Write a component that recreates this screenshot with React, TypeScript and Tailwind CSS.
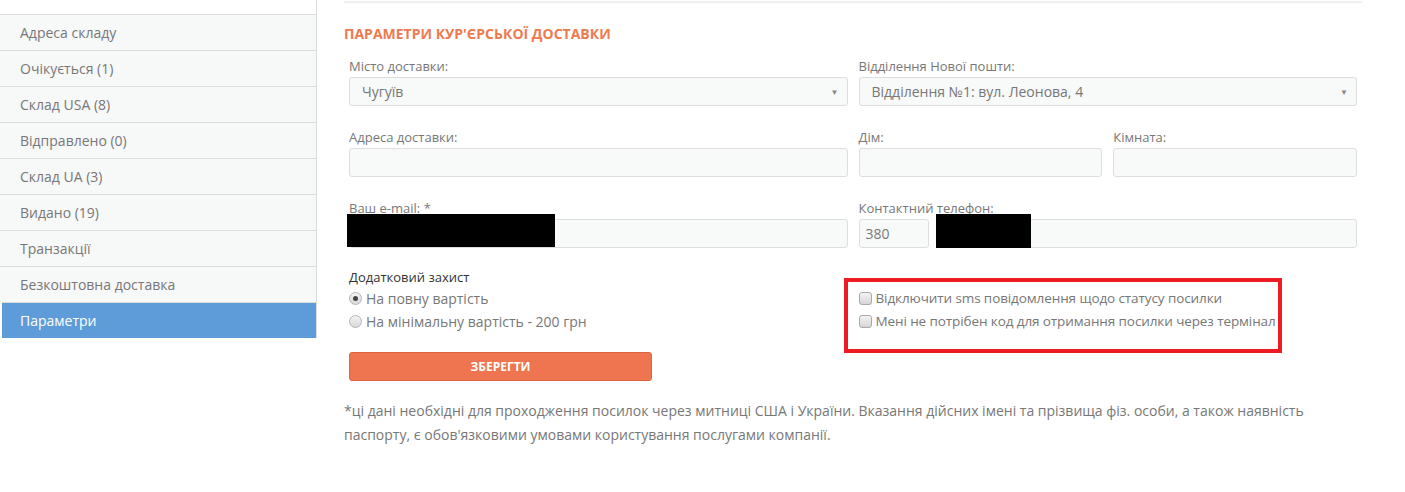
import React from 'react';

const MENU = [
  'Адреса складу',
  'Очікується (1)',
  'Склад USA (8)',
  'Відправлено (0)',
  'Склад UA (3)',
  'Видано (19)',
  'Транзакції',
  'Безкоштовна доставка',
];

const FONT = { fontFamily: '"Open Sans", "Noto Sans", sans-serif' };

function Label({ children }: { children: React.ReactNode }) {
  return <label className="block text-[13px] leading-[18px] text-[#777] mb-[2px]">{children}</label>;
}

function Input({ className = '' }: { className?: string }) {
  return (
    <div
      className={`h-[29px] bg-[#f8f9f9] border border-[#dedede] rounded-[3px] ${className}`}
    />
  );
}

function Select({ value }: { value: string }) {
  return (
    <div className="h-[29px] bg-[#f8f9f9] border border-[#dedede] rounded-[3px] flex items-center justify-between pl-[12px] pr-[8px]">
      <span className="text-[14px] text-[#777]">{value}</span>
      <span className="text-[8px] text-[#888] leading-none">▼</span>
    </div>
  );
}

function Radio({ checked, children }: { checked?: boolean; children: React.ReactNode }) {
  return (
    <div className="flex items-center h-[23px] gap-[4px]">
      <span className="w-[13px] h-[13px] rounded-full border border-[#b5b5b5] bg-gradient-to-b from-[#f4f4f4] to-[#d8d8d8] flex items-center justify-center">
        {checked && <span className="w-[5px] h-[5px] rounded-full bg-[#444]" />}
      </span>
      <span className="text-[14px] text-[#777]">{children}</span>
    </div>
  );
}

function Check({ children }: { children: React.ReactNode }) {
  return (
    <div className="flex items-center h-[23px] gap-[4px] whitespace-nowrap">
      <span className="shrink-0 w-[13px] h-[13px] rounded-[3px] border border-[#a9a9a9] bg-gradient-to-b from-[#f4f4f4] to-[#d6d6d6]" />
      <span className="text-[13.5px] tracking-[-0.1px] text-[#777]">{children}</span>
    </div>
  );
}

export default function App() {
  return (
    <div className="flex bg-white w-[1405px] h-[492px] overflow-hidden" style={FONT}>
      {/* Sidebar */}
      <div className="w-[317px] shrink-0 self-start border-r border-[#dcdcdc] pt-[14px]">
        {MENU.map((item) => (
          <div
            key={item}
            className="h-[36px] border-t border-[#dcdcdc] bg-[#f7f8f8] flex items-center pl-[20px] text-[14px] text-[#777]"
          >
            {item}
          </div>
        ))}
        <div className="h-[36px] border-t border-[#dcdcdc] ml-[2px] bg-[#5e9cd9] flex items-center pl-[18px] text-[14px] text-white">
          Параметри
        </div>
      </div>

      {/* Main */}
      <div className="pl-[27px] w-[1045px]">
        <div className="mt-[1px] h-[2px] bg-[#f0f0f0]" />

        <h2 className="mt-[21px] text-[14px] leading-[19px] font-bold uppercase text-[#ee7a4f]">
          Параметри кур'єрської доставки
        </h2>

        <div className="pl-[5px] w-[1013px]">
          {/* Row 1 */}
          <div className="grid grid-cols-2 gap-x-[11px] mt-[14px]">
            <div>
              <Label>Місто доставки:</Label>
              <Select value="Чугуїв" />
            </div>
            <div>
              <Label>Відділення Нової пошти:</Label>
              <Select value="Відділення №1: вул. Леонова, 4" />
            </div>
          </div>

          {/* Row 2 */}
          <div className="grid grid-cols-2 gap-x-[11px] mt-[22px]">
            <div>
              <Label>Адреса доставки:</Label>
              <Input />
            </div>
            <div className="grid grid-cols-2 gap-x-[11px]">
              <div>
                <Label>Дім:</Label>
                <Input />
              </div>
              <div>
                <Label>Кімната:</Label>
                <Input />
              </div>
            </div>
          </div>

          {/* Row 3 */}
          <div className="grid grid-cols-2 gap-x-[11px] mt-[22px]">
            <div className="relative">
              <Label>Ваш e-mail: *</Label>
              <Input />
              <div className="absolute left-[-2px] top-[15px] w-[208px] h-[33px] bg-black" />
            </div>
            <div>
              <Label>Контактний телефон:</Label>
              <div className="flex gap-[7px] relative">
                <div className="w-[70px] h-[29px] bg-[#f8f9f9] border border-[#dedede] rounded-[3px] flex items-center pl-[6px] text-[14px] text-[#777]">
                  380
                </div>
                <Input className="flex-1" />
                <div className="absolute left-[77px] top-[-5px] w-[95px] h-[34px] bg-black" />
              </div>
            </div>
          </div>

          {/* Row 4 */}
          <div className="grid grid-cols-2 gap-x-[11px] mt-[20px]">
            <div>
              <div className="text-[13px] leading-[18px] text-[#333]">Додатковий захист</div>
              <div className="mt-[1px]">
                <Radio checked>На повну вартість</Radio>
                <Radio>На мінімальну вартість - 200 грн</Radio>
              </div>
              <button className="mt-[19px] w-[303px] h-[29px] bg-[#ee7550] border border-[#dc6440] rounded-[3px] text-white text-[12px] font-bold">
                ЗБЕРЕГТИ
              </button>
            </div>
            <div>
              <div className="-ml-[15px] mt-[10px] w-[438px] h-[75px] border-[4px] border-[#ed1c24] pl-[11px] pt-[5px]">
                <Check>Відключити sms повідомлення щодо статусу посилки</Check>
                <Check>Мені не потрібен код для отримання посилки через термінал</Check>
              </div>
            </div>
          </div>
        </div>

        <p className="mt-[18px] w-[1016px] text-[14px] leading-[24px] text-[#777]">
          *ці дані необхідні для проходження посилок через митниці США і України. Вказання дійсних імені та прізвища фіз. особи, а також наявність паспорту, є обов'язковими умовами користування послугами компанії.
        </p>
      </div>
    </div>
  );
}
